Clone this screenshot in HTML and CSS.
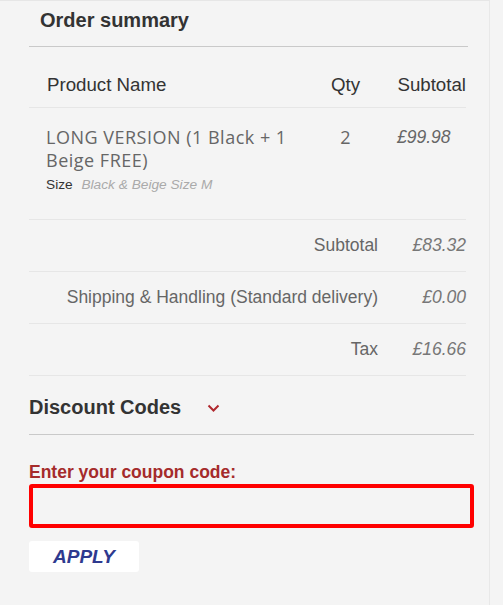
FILE: index.html
```html
<!DOCTYPE html>
<html lang="en">
<head>
    <meta charset="UTF-8">
    <meta name="viewport" content="width=device-width, initial-scale=1.0">
    <title>Order summary</title>
    <link rel="stylesheet" href="styles.css">
</head>
<body>

    <div class="panel">
        <h2 class="summary-title">Order summary</h2>

        <!-- Items -->
        <table class="summary-table">
            <colgroup>
                <col>
                <col class="col-qty">
                <col class="col-sub">
            </colgroup>
            <thead>
                <tr>
                    <th class="cell-name">Product Name</th>
                    <th class="cell-qty">Qty</th>
                    <th class="cell-sub">Subtotal</th>
                </tr>
            </thead>
            <tbody>
                <tr class="item-row">
                    <td class="cell-name">
                        <div class="item-name">LONG VERSION (1 Black + 1 Beige FREE)</div>
                        <div class="item-option">
                            <span class="option-label">Size</span>
                            <span class="option-value">Black &amp; Beige Size M</span>
                        </div>
                    </td>
                    <td class="cell-qty item-qty">2</td>
                    <td class="cell-sub price">£99.98</td>
                </tr>

                <!-- Totals -->
                <tr class="total-row">
                    <td colspan="2" class="total-label">Subtotal</td>
                    <td class="total-value">£83.32</td>
                </tr>
                <tr class="total-row">
                    <td colspan="2" class="total-label">Shipping &amp; Handling (Standard delivery)</td>
                    <td class="total-value">£0.00</td>
                </tr>
                <tr class="total-row">
                    <td colspan="2" class="total-label">Tax</td>
                    <td class="total-value">£16.66</td>
                </tr>
            </tbody>
        </table>

        <!-- Discount -->
        <div class="discount">
            <div class="discount-head">
                <span>Discount Codes</span>
                <svg class="chevron" width="13" height="8" viewBox="0 0 13 8">
                    <path d="M1.5 1.5 L6.5 6.5 L11.5 1.5" fill="none" stroke="#b0282e" stroke-width="2"/>
                </svg>
            </div>
            <form id="coupon-form">
                <label class="coupon-label" for="coupon">Enter your coupon code:</label>
                <input type="text" id="coupon" class="coupon-input">
                <button type="submit" class="apply-btn">APPLY</button>
            </form>
        </div>
    </div>

</body>
</html>
```

FILE: styles.css
```css
body {
    margin: 0;
    background: #f4f4f4;
    font-family: 'Liberation Sans', Arial, sans-serif;
    color: #333;
}
.panel {
    width: 490px;
    min-height: 100vh;
    box-sizing: border-box;
    padding-left: 29px;
    border-top: 1px solid #e6e6e6;
    border-right: 1px solid #e8e8e8;
}
.summary-title {
    width: 439px;
    margin: 0;
    padding: 7px 0 14px 11px;
    box-sizing: border-box;
    font-size: 20px;
    line-height: 24px;
    font-weight: bold;
    color: #333;
    border-bottom: 1px solid #c9c9c9;
}
.summary-table {
    width: 437px;
    table-layout: fixed;
    border-collapse: collapse;
}
.col-qty {
    width: 60px;
}
.col-sub {
    width: 88px;
}
th, td {
    padding: 0;
    vertical-align: top;
}
tr {
    border-bottom: 1px solid #e6e6e6;
}
th {
    padding-top: 26px;
    padding-bottom: 10px;
    font-size: 18.7px;
    line-height: 24px;
    font-weight: normal;
    color: #333;
    text-align: left;
}
.cell-name {
    padding-left: 18px;
}
.cell-qty {
    text-align: center;
    padding-right: 5px;
}
.cell-sub {
    padding-left: 19px;
}
th.cell-sub {
    padding-left: 0;
    text-align: right;
}
.item-row td {
    padding-top: 18px;
    padding-bottom: 25px;
}
.item-row .cell-name {
    padding-left: 17px;
}
.item-name {
    max-width: 250px;
    font-family: 'Open Sans', sans-serif;
    font-size: 18px;
    line-height: 23px;
    letter-spacing: 0.5px;
    color: #666;
}
.item-qty {
    font-family: 'Open Sans', sans-serif;
    font-size: 18px;
    line-height: 23px;
    color: #666;
}
.item-option {
    margin-top: 4px;
    font-size: 13.7px;
    line-height: 18px;
}
.option-label {
    color: #333;
    margin-right: 5px;
}
.option-value {
    color: #aaa;
    font-style: italic;
}
.price {
    font-size: 17.5px;
    line-height: 23px;
    font-style: italic;
    color: #666;
}
.total-row td {
    padding-top: 15px;
    padding-bottom: 15px;
    font-size: 17.5px;
    line-height: 21px;
}
.total-label {
    text-align: right;
    color: #666;
}
.total-value {
    text-align: right;
    font-style: italic;
    color: #777;
}
.discount {
    width: 445px;
}
.discount-head {
    display: flex;
    align-items: center;
    padding: 19px 0 15px;
    font-size: 20px;
    line-height: 24px;
    font-weight: bold;
    color: #333;
    border-bottom: 1px solid #c9c9c9;
}
.chevron {
    margin-left: 26px;
    margin-top: 2px;
}
.coupon-label {
    display: block;
    margin-top: 27px;
    font-size: 17.5px;
    line-height: 20px;
    font-weight: bold;
    color: #a52b2b;
}
.coupon-input {
    display: block;
    width: 100%;
    height: 44px;
    margin-top: 2px;
    box-sizing: border-box;
    border: 4px solid #ff0000;
    border-radius: 3px;
    background: transparent;
    outline: none;
}
.apply-btn {
    display: block;
    width: 110px;
    height: 31px;
    margin-top: 13px;
    padding: 0;
    background: #fff;
    border: none;
    border-radius: 3px;
    font-family: 'Liberation Sans', Arial, sans-serif;
    font-size: 19px;
    font-weight: bold;
    font-style: italic;
    color: #2e3a8f;
    cursor: pointer;
}
```
